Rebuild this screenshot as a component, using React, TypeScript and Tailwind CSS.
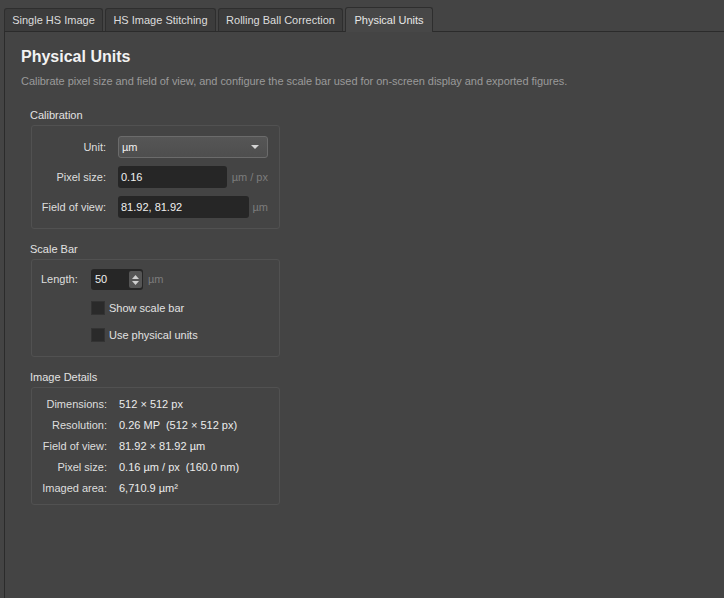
import React from 'react';

const tabs: [string, string][] = [
  ['Single HS Image', 'w-[99px]'],
  ['HS Image Stitching', 'w-[111px]'],
  ['Rolling Ball Correction', 'w-[125px]'],
  ['Physical Units', 'w-[88px]'],
];

function GroupBox({ title, children, className }: { title: string; children: React.ReactNode; className?: string }) {
  return (
    <div className={className}>
      <div className="ml-[9px] h-[16px] leading-[16px] text-[#e2e2e2]">{title}</div>
      <div className="mt-[2px] ml-[10px] w-[249px] rounded-[3px] border border-[#515151]">{children}</div>
    </div>
  );
}

function Check({ label }: { label: string }) {
  return (
    <div className="flex items-center gap-[4px] h-[14px]">
      <div className="w-[14px] h-[14px] bg-[#2a2a2a] border border-[#333]" />
      <span className="text-[#e2e2e2]">{label}</span>
    </div>
  );
}

const details: [string, string][] = [
  ['Dimensions:', '512 × 512 px'],
  ['Resolution:', '0.26 MP  (512 × 512 px)'],
  ['Field of view:', '81.92 × 81.92 µm'],
  ['Pixel size:', '0.16 µm / px  (160.0 nm)'],
  ['Imaged area:', '6,710.9 µm²'],
];

export default function App() {
  return (
    <div className="w-[724px] h-[598px] bg-[#444444] overflow-hidden flex flex-col text-[11px] font-['Liberation_Sans',sans-serif] text-[#dedede]">
      <div className="h-[31px] flex items-end pl-[4px] gap-[2px] shrink-0">
        {tabs.map(([t, w], i) =>
          i === 3 ? (
            <div
              key={t}
              className={`${w} relative z-10 -mb-px h-[25px] flex items-center justify-center bg-[#474747] border border-b-0 border-[#2e2e2e] rounded-t-[3px] text-[#e8e8e8] whitespace-nowrap`}
            >
              {t}
            </div>
          ) : (
            <div
              key={t}
              className={`${w} h-[23px] flex items-center justify-center bg-[#3c3c3c] border border-b-0 border-[#2e2e2e] rounded-t-[3px] text-[#dcdcdc] whitespace-nowrap`}
            >
              {t}
            </div>
          )
        )}
      </div>
      <div className="flex-1 ml-[4px] border-l border-t border-[#2b2b2b] bg-[#444444] pl-[16px]">
        <div className="mt-[15px] text-[16px] font-bold leading-[20px] text-[#f2f2f2]">Physical Units</div>
        <div className="mt-[7px] leading-[14px] tracking-[-0.04px] text-[#9a9a9a]">
          Calibrate pixel size and field of view, and configure the scale bar used for on-screen display and exported figures.
        </div>

        <GroupBox title="Calibration" className="mt-[19px]">
          <div className="pt-[10px] pb-[10px] pl-[9px] flex flex-col gap-[8px]">
            <div className="flex items-center">
              <div className="w-[65px] text-right">Unit:</div>
              <div className="ml-[12px] w-[150px] h-[22px] rounded-[3px] border border-[#6b6b6b] bg-gradient-to-b from-[#565656] to-[#4e4e4e] flex items-center justify-between pl-[3px] pr-[8px] text-[#f0f0f0]">
                <span>µm</span>
                <svg width="8" height="4" viewBox="0 0 8 4"><path d="M0 0h8L4 4z" fill="#d4d4d4" /></svg>
              </div>
            </div>
            <div className="flex items-center">
              <div className="w-[65px] text-right">Pixel size:</div>
              <div className="ml-[12px] w-[150px] flex items-center justify-between">
                <div className="w-[109px] h-[22px] rounded-[3px] bg-[#262626] flex items-center pl-[3px] text-[#f0f0f0]">0.16</div>
                <span className="text-[#7c7c7c]">µm / px</span>
              </div>
            </div>
            <div className="flex items-center">
              <div className="w-[65px] text-right">Field of view:</div>
              <div className="ml-[12px] w-[150px] flex items-center justify-between">
                <div className="w-[131px] h-[22px] rounded-[3px] bg-[#262626] flex items-center pl-[3px] text-[#f0f0f0]">81.92, 81.92</div>
                <span className="text-[#7c7c7c]">µm</span>
              </div>
            </div>
          </div>
        </GroupBox>

        <GroupBox title="Scale Bar" className="mt-[12px]">
          <div className="pt-[9px] pb-[14px] pl-[9px] flex flex-col">
            <div className="flex items-center">
              <div className="w-[38px]">Length:</div>
              <div className="ml-[12px] w-[52px] h-[21px] rounded-[3px] bg-[#262626] flex items-center justify-between pl-[4px] pr-[1px]">
                <span className="text-[#f0f0f0]">50</span>
                <div className="w-[13px] h-[17px] rounded-[2px] bg-[#555] flex flex-col items-center justify-center gap-[2px]">
                  <svg width="7" height="4" viewBox="0 0 7 4"><path d="M0 4L3.5 0L7 4z" fill="#cfcfcf" /></svg>
                  <svg width="7" height="4" viewBox="0 0 7 4"><path d="M0 0h7L3.5 4z" fill="#cfcfcf" /></svg>
                </div>
              </div>
              <span className="ml-[5px] text-[#7c7c7c]">µm</span>
            </div>
            <div className="ml-[50px] mt-[11px] flex flex-col gap-[13px]">
              <Check label="Show scale bar" />
              <Check label="Use physical units" />
            </div>
          </div>
        </GroupBox>

        <GroupBox title="Image Details" className="mt-[12px]">
          <div className="pt-[6px] pb-[5px] pl-[9px] flex flex-col">
            {details.map(([k, v]) => (
              <div key={k} className="flex items-center h-[21px]">
                <div className="w-[66px] text-right">{k}</div>
                <div className="ml-[12px] text-[#ececec] whitespace-pre">{v}</div>
              </div>
            ))}
          </div>
        </GroupBox>
      </div>
    </div>
  );
}
